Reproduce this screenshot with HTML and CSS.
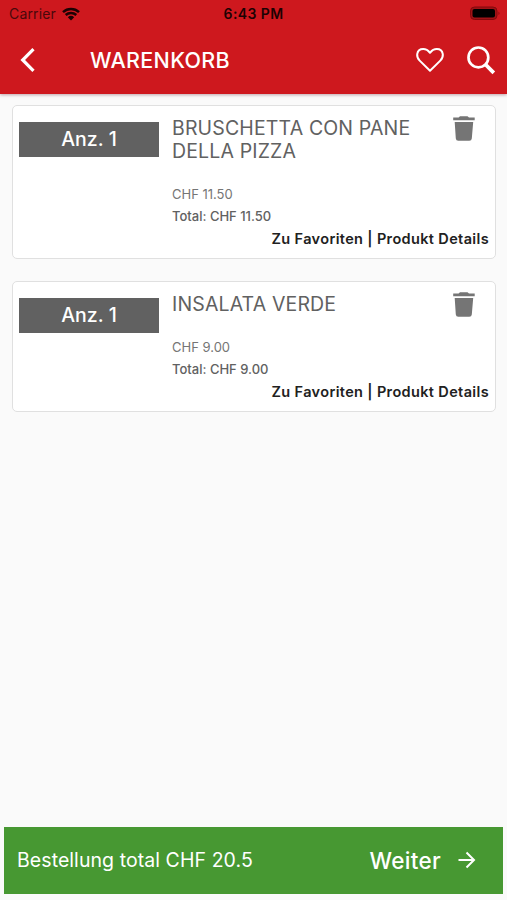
FILE: index.html
```
<!DOCTYPE html>
<html lang="de">
<head>
<meta charset="utf-8">
<title>Warenkorb</title>
<link rel="stylesheet" href="styles.css">
</head>

<body>

<header class="header">
<div class="status">
<div class="status-left">
<span class="carrier">Carrier</span>
<svg class="wifi" width="18" height="14" viewBox="0 0 18 14">
<path d="M1 5.1a11.8 11.8 0 0 1 16 0M3.7 8a7.8 7.8 0 0 1 10.6 0" fill="none" stroke="#1c0203" stroke-width="2.5"/>
<path d="M5.8 10.3a4.7 4.7 0 0 1 6.4 0L9 13.5z" fill="#1c0203"/>
</svg>
</div>
<span class="time">6:43 PM</span>
<svg class="battery" width="31" height="15" viewBox="0 0 31 15">
<rect x="0.5" y="1" width="26.5" height="12.5" rx="4" fill="#a01216" stroke="#84090c"/>
<rect x="2.5" y="3" width="22.5" height="8.5" rx="2" fill="#000000"/>
<path d="M28.5 5.5q2 1.8 0 3.6z" fill="#84090c"/>
</svg>
</div>

<div class="toolbar">
<svg class="back" width="18" height="26" viewBox="0 0 18 26">
<path d="M15.5 2.2L4.7 13l10.8 10.8" fill="none" stroke="#ffffff" stroke-width="3.2"/>
</svg>
<h1 class="title">WARENKORB</h1>
<svg class="heart" width="30" height="26" viewBox="0 0 30 26">
<path d="M15 23.7L4.7 13.6C2.3 11.2 2 8.8 2.2 7.1C2.7 3.900 5 2 8.2 2C11 2 13 3.2 15 5.8C17 3.2 19 2 21.8 2C25 2 27.3 3.900 27.8 7.1C28 8.8 27.7 11.2 25.3 13.6Z" fill="none" stroke="#ffffff" stroke-width="2" stroke-linejoin="round"/>
</svg>
<svg class="search" width="30" height="30" viewBox="0 0 30 30">
<circle cx="12.4" cy="12.4" r="9.9" fill="none" stroke="#ffffff" stroke-width="2.7"/>
<path d="M19 19l8.8 8.8" fill="none" stroke="#ffffff" stroke-width="3.8"/>
</svg>
</div>
</header>

<main class="cart">

<section class="item">
<div class="amount">Anz. 1</div>
<div class="info">
<h2 class="name">BRUSCHETTA CON PANE DELLA PIZZA</h2>
<div class="price">CHF 11.50</div>
<div class="total">Total: CHF 11.50</div>
</div>
<svg class="trash" width="22" height="26" viewBox="0 0 22 26">
<path d="M7 .2h7.5l1.5 1.200h5.7v2.800H0.2V1.400h5.4zM1.7 6h18.5L18.8 22.500q-.2 2.300-2.500 2.300H5.3Q3 24.800 2.8 22.500z" fill="#757575"/>
</svg>
<div class="links">Zu Favoriten | Produkt Details</div>
</section>

<section class="item">
<div class="amount">Anz. 1</div>
<div class="info">
<h2 class="name">INSALATA VERDE</h2>
<div class="price">CHF 9.00</div>
<div class="total">Total: CHF 9.00</div>
</div>
<svg class="trash" width="22" height="26" viewBox="0 0 22 26">
<path d="M7 .2h7.5l1.5 1.200h5.7v2.800H0.2V1.400h5.4zM1.7 6h18.5L18.8 22.500q-.2 2.300-2.500 2.300H5.3Q3 24.800 2.8 22.500z" fill="#757575"/>
</svg>
<div class="links">Zu Favoriten | Produkt Details</div>
</section>

</main>

<footer class="checkout">
<span class="sum">Bestellung total CHF 20.5</span>
<span class="next">Weiter</span>
<svg class="arrow" width="18" height="18" viewBox="0 0 18 18">
<path d="M0.5 9h15.5M8.5 1.5L16 9l-7.5 7.5" fill="none" stroke="#ffffff" stroke-width="2"/>
</svg>
</footer>

</body>
</html>
```
FILE: styles.css
```
body {
  display: flex;
  flex-direction: column;
  height: 900px;
  margin: 0;
  background-color: #fafafa;
  font-family: Inter, "Liberation Sans", sans-serif;
}

h1, h2 {
  margin: 0;
  font-weight: 400;
}

svg {
  display: block;
}

.header {
  height: 94px;
  background-color: #ce181e;
  box-shadow: 0 1px 3px rgba(80, 0, 20, 0.35);
}

.status {
  display: grid;
  grid-template-columns: 1fr auto 1fr;
  align-items: center;
  height: 27px;
  padding: 0 6px 0 9px;
  color: #1c0203;
  font-size: 14px;
}

.status-left {
  display: flex;
  align-items: center;
  gap: 6px;
}

.carrier {
  color: #4a080b;
  letter-spacing: 0.15px;
}

.time {
  margin-right: 3px;
  font-weight: 600;
  letter-spacing: 0.4px;
}

.battery {
  justify-self: end;
}

.toolbar {
  display: flex;
  align-items: center;
  height: 66px;
  padding: 0 11px 0 18px;
}

.title {
  flex: 1;
  margin-left: 54px;
  color: #ffffff;
  font-size: 21.5px;
  font-weight: 500;
  letter-spacing: 0.3px;
}

.heart {
  margin-right: 21px;
}

.cart {
  flex: 1;
  padding: 11px 11px 0 12px;
}

.item {
  display: grid;
  grid-template-columns: 140px 1fr auto;
  column-gap: 13px;
  align-items: start;
  box-sizing: border-box;
  margin-bottom: 22px;
  padding: 10px 6px 8px;
  border: 1px solid #e0e0e0;
  border-radius: 5px;
  background-color: #ffffff;
}

.amount {
  height: 35px;
  margin-top: 6px;
  background-color: #616161;
  color: #ffffff;
  font-size: 19.5px;
  font-weight: 500;
  line-height: 35px;
  text-align: center;
}

.name {
  padding-top: 1px;
  color: #616161;
  font-size: 19.5px;
  letter-spacing: 0.15px;
  line-height: 23px;
}

.price, .total {
  color: #757575;
  font-size: 13px;
  line-height: 22px;
}

.price {
  margin-top: 20px;
}

.total {
  color: #616161;
  font-weight: 500;
}

.trash {
  margin-right: 14px;
}

.links {
  grid-column: 1 / -1;
  color: #212121;
  font-size: 14.5px;
  font-weight: 600;
  letter-spacing: 0.36px;
  line-height: 23px;
  text-align: right;
}

.checkout {
  display: flex;
  align-items: center;
  height: 67px;
  margin: 0 4px 6px;
  padding: 0 27px 1px 13px;
  background-color: #479832;
  color: #ffffff;
  box-sizing: border-box;
}

.sum {
  flex: 1;
  font-size: 19.5px;
  letter-spacing: 0.07px;
}

.next {
  margin-right: 17px;
  font-size: 22.5px;
  font-weight: 500;
  letter-spacing: 0.3px;
}
```
